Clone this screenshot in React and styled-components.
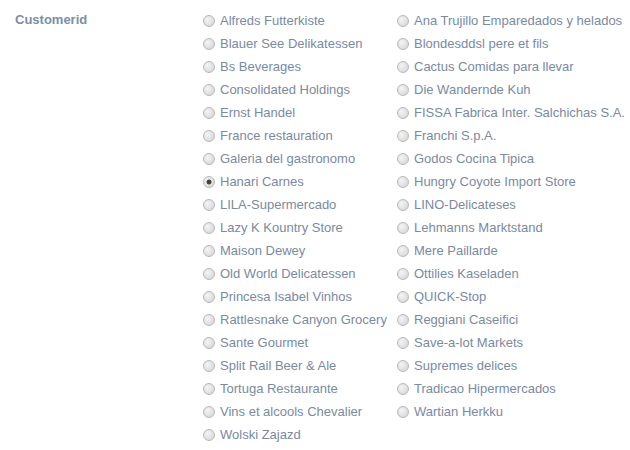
import React, { useState } from "react";
import styled, { createGlobalStyle } from "styled-components";

const Global = createGlobalStyle`
  html, body { margin: 0; padding: 0; background: #fff; }
  body { font-family: "Liberation Sans", Arial, sans-serif; }
`;

const Page = styled.div`
  display: flex;
  align-items: flex-start;
  padding: 8px 0 0 15px;
`;

const FieldLabel = styled.div`
  width: 188px;
  font-size: 13px;
  font-weight: bold;
  color: #7b8ea6;
  line-height: 23px;
`;

const Options = styled.div`
  display: grid;
  grid-template-columns: 194px 220px;
  grid-auto-rows: 23px;
  padding-top: 1px;
`;

const Option = styled.label`
  display: flex;
  align-items: center;
  gap: 5px;
  font-size: 13px;
  color: #7a8a9f;
  white-space: nowrap;
  cursor: pointer;
`;

const Radio = styled.input.attrs({ type: "radio" })`
  appearance: none;
  margin: 0;
  width: 12px;
  height: 12px;
  border-radius: 50%;
  border: 1px solid #b9b9b9;
  background: radial-gradient(circle at 35% 35%, #f4f4f4 0%, #dcdcdc 70%, #cfcfcf 100%);
  box-sizing: border-box;
  flex: none;
  &:checked {
    background:
      radial-gradient(circle at 50% 50%, #3c3c3c 0, #4a4a4a 2.2px, transparent 2.8px),
      radial-gradient(circle at 35% 35%, #f4f4f4 0%, #dcdcdc 70%, #cfcfcf 100%);
  }
`;

const customers = [
  "Alfreds Futterkiste", "Ana Trujillo Emparedados y helados",
  "Blauer See Delikatessen", "Blondesddsl pere et fils",
  "Bs Beverages", "Cactus Comidas para llevar",
  "Consolidated Holdings", "Die Wandernde Kuh",
  "Ernst Handel", "FISSA Fabrica Inter. Salchichas S.A.",
  "France restauration", "Franchi S.p.A.",
  "Galeria del gastronomo", "Godos Cocina Tipica",
  "Hanari Carnes", "Hungry Coyote Import Store",
  "LILA-Supermercado", "LINO-Delicateses",
  "Lazy K Kountry Store", "Lehmanns Marktstand",
  "Maison Dewey", "Mere Paillarde",
  "Old World Delicatessen", "Ottilies Kaseladen",
  "Princesa Isabel Vinhos", "QUICK-Stop",
  "Rattlesnake Canyon Grocery", "Reggiani Caseifici",
  "Sante Gourmet", "Save-a-lot Markets",
  "Split Rail Beer & Ale", "Supremes delices",
  "Tortuga Restaurante", "Tradicao Hipermercados",
  "Vins et alcools Chevalier", "Wartian Herkku",
  "Wolski Zajazd",
];

export default function App() {
  const [value, setValue] = useState("Hanari Carnes");
  return (
    <>
      <Global />
      <Page>
        <FieldLabel>Customerid</FieldLabel>
        <Options>
          {customers.map((c) => (
            <Option key={c}>
              <Radio
                name="customerid"
                checked={value === c}
                onChange={() => setValue(c)}
              />
              {c}
            </Option>
          ))}
        </Options>
      </Page>
    </>
  );
}
